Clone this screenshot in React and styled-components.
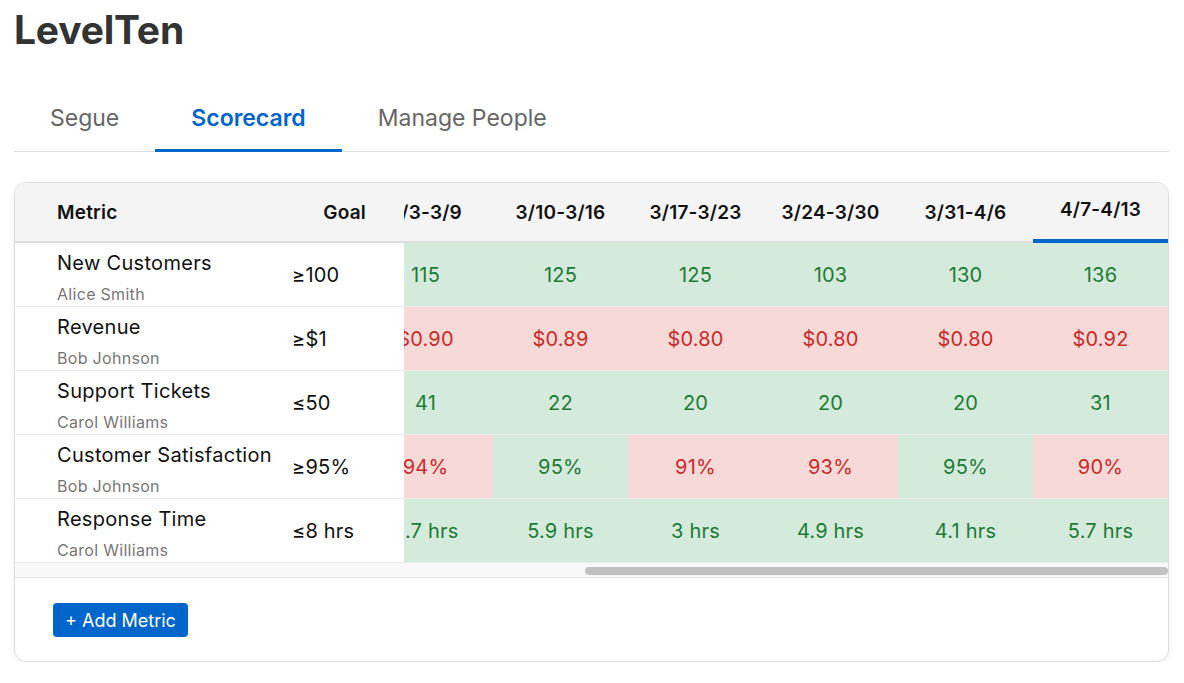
import React, { useLayoutEffect, useRef, useState } from 'react'
import styled, { createGlobalStyle } from 'styled-components'

const GlobalStyle = createGlobalStyle`
  body {
    margin: 0;
    background: #fff;
    font-family: Inter, "Noto Sans", sans-serif;
    color: #111;
  }
`

const Page = styled.div`
  padding: 0 15px 0 14px;
`

const Title = styled.h1`
  margin: 0;
  padding-top: 6px;
  font-size: 39px;
  line-height: 48px;
  font-weight: 700;
  color: #333;
  letter-spacing: -0.2px;
`

const Tabs = styled.div`
  display: flex;
  margin-top: 32px;
  border-bottom: 1px solid #ddd;
`

const Tab = styled.div`
  padding: 0 36px;
  height: 63px;
  display: flex;
  align-items: center;
  font-size: 23px;
  font-weight: ${p => (p.active ? 600 : 400)};
  color: ${p => (p.active ? '#0066cc' : '#666')};
  border-bottom: 3px solid ${p => (p.active ? '#0066cc' : 'transparent')};
  margin-bottom: -1px;
`

const Card = styled.div`
  margin-top: 30px;
  border: 1px solid #ddd;
  border-radius: 12px;
  box-shadow: 0 2px 6px rgba(0, 0, 0, 0.06);
  overflow: hidden;
`

const Scroller = styled.div`
  overflow-x: auto;
  scrollbar-width: none;
`

const ScrollTrack = styled.div`
  height: 14px;
  padding: 4px 0 2px;
  box-sizing: border-box;
  background: #f8f8f8;
`

const ScrollThumb = styled.div`
  height: 8px;
  border-radius: 4px;
  background: #c1c1c1;
`

const Table = styled.table`
  border-collapse: separate;
  border-spacing: 0;
  table-layout: fixed;
  width: ${p => p.width}px;
`

const Th = styled.th`
  height: 60px;
  box-sizing: border-box;
  padding: 0;
  background: #f4f4f4;
  border-bottom: 2px solid #ddd;
  font-size: 19px;
  font-weight: 600;
  letter-spacing: 0.2px;
  color: #111;
  text-align: center;
  white-space: nowrap;
`

const MetricTh = styled(Th)`
  position: sticky;
  left: 0;
  z-index: 2;
  text-align: left;
  padding-left: 42px;
`

const GoalTh = styled(Th)`
  position: sticky;
  left: 265px;
  z-index: 2;
  text-align: right;
  padding-right: 38px;
`

const WeekTh = styled(Th)`
  border-bottom-color: ${p => (p.current ? '#0066cc' : '#ddd')};
  box-shadow: ${p => (p.current ? 'inset 0 -2px 0 #0066cc' : 'none')};
  padding-bottom: ${p => (p.current ? '5px' : '0')};
`

const Td = styled.td`
  height: 64px;
  box-sizing: border-box;
  padding: 0;
  border-bottom: 1px solid #eaeaea;
  vertical-align: middle;
  white-space: nowrap;
`

const MetricTd = styled(Td)`
  position: sticky;
  left: 0;
  z-index: 1;
  background: #fff;
  vertical-align: top;
  padding: 8px 0 0 42px;
`

const MetricName = styled.div`
  font-size: 20px;
  line-height: 24px;
  letter-spacing: 0.3px;
  color: #111;
`

const Owner = styled.div`
  margin-top: 10px;
  font-size: 16px;
  line-height: 19px;
  letter-spacing: 0.3px;
  color: #777;
`

const GoalTd = styled(Td)`
  position: sticky;
  left: 265px;
  z-index: 1;
  background: #fff;
  padding-left: 12px;
  font-size: 20px;
  letter-spacing: 0.2px;
  color: #111;
`

const ValueTd = styled(Td)`
  text-align: center;
  font-size: 20px;
  letter-spacing: 0.2px;
  background: ${p => (p.ok ? '#d4eadb' : '#f7d9d8')};
  color: ${p => (p.ok ? '#1d7a36' : '#c92a2a')};
`

const Footer = styled.div`
  border-top: 1px solid #e8e8e8;
  padding: 25px 38px 24px;
`

const AddButton = styled.button`
  display: block;
  height: 34px;
  padding: 0 12px;
  border: none;
  border-radius: 4px;
  background: #0066cc;
  color: #fff;
  font-family: inherit;
  font-size: 18px;
  cursor: pointer;
`

const weeks = [
  '1/6-1/12', '1/13-1/19', '1/20-1/26', '1/27-2/2', '2/3-2/9', '2/10-2/16',
  '2/17-2/23', '2/24-3/2', '3/3-3/9', '3/10-3/16', '3/17-3/23', '3/24-3/30',
  '3/31-4/6', '4/7-4/13',
]

const metrics = [
  {
    name: 'New Customers', owner: 'Alice Smith', op: '≥', target: 100,
    fmt: v => `${v}`, goal: '≥100',
    values: [98, 104, 110, 96, 121, 108, 112, 99, 115, 125, 125, 103, 130, 136],
  },
  {
    name: 'Revenue', owner: 'Bob Johnson', op: '≥', target: 1,
    fmt: v => `$${v.toFixed(2)}`, goal: '≥$1',
    values: [0.85, 0.91, 0.88, 0.93, 0.87, 0.9, 0.86, 0.84, 0.9, 0.89, 0.8, 0.8, 0.8, 0.92],
  },
  {
    name: 'Support Tickets', owner: 'Carol Williams', op: '≤', target: 50,
    fmt: v => `${v}`, goal: '≤50',
    values: [38, 45, 52, 33, 29, 47, 36, 40, 41, 22, 20, 20, 20, 31],
  },
  {
    name: 'Customer Satisfaction', owner: 'Bob Johnson', op: '≥', target: 95,
    fmt: v => `${v}%`, goal: '≥95%',
    values: [96, 92, 95, 97, 93, 96, 94, 95, 94, 95, 91, 93, 95, 90],
  },
  {
    name: 'Response Time', owner: 'Carol Williams', op: '≤', target: 8,
    fmt: v => `${v} hrs`, goal: '≤8 hrs',
    values: [6.2, 7.1, 5.4, 6.8, 4.5, 7.9, 5.2, 6.1, 2.7, 5.9, 3, 4.9, 4.1, 5.7],
  },
]

const meets = (m, v) => (m.op === '≥' ? v >= m.target : v <= m.target)

const METRIC_W = 265
const GOAL_W = 124
const WEEK_W = 135

const Scorecard = () => {
  const scroller = useRef(null)
  const [thumb, setThumb] = useState({ left: 0, width: 0 })

  const syncThumb = () => {
    const el = scroller.current
    if (!el) return
    const ratio = el.clientWidth / el.scrollWidth
    setThumb({ left: el.scrollLeft * ratio, width: el.clientWidth * ratio })
  }

  useLayoutEffect(() => {
    const el = scroller.current
    if (el) el.scrollLeft = el.scrollWidth
    syncThumb()
  }, [])

  return (
    <Card>
      <Scroller ref={scroller} onScroll={syncThumb}>
        <Table width={METRIC_W + GOAL_W + WEEK_W * weeks.length}>
          <colgroup>
            <col style={{ width: METRIC_W }} />
            <col style={{ width: GOAL_W }} />
            {weeks.map(w => (
              <col key={w} style={{ width: WEEK_W }} />
            ))}
          </colgroup>
          <thead>
            <tr>
              <MetricTh>Metric</MetricTh>
              <GoalTh>Goal</GoalTh>
              {weeks.map((w, i) => (
                <WeekTh key={w} current={i === weeks.length - 1}>{w}</WeekTh>
              ))}
            </tr>
          </thead>
          <tbody>
            {metrics.map(m => (
              <tr key={m.name}>
                <MetricTd>
                  <MetricName>{m.name}</MetricName>
                  <Owner>{m.owner}</Owner>
                </MetricTd>
                <GoalTd>{m.goal}</GoalTd>
                {m.values.map((v, i) => (
                  <ValueTd key={weeks[i]} ok={meets(m, v)}>{m.fmt(v)}</ValueTd>
                ))}
              </tr>
            ))}
          </tbody>
        </Table>
      </Scroller>
      <ScrollTrack>
        <ScrollThumb style={{ marginLeft: thumb.left, width: thumb.width }} />
      </ScrollTrack>
      <Footer>
        <AddButton>+ Add Metric</AddButton>
      </Footer>
    </Card>
  )
}

const App = () => (
  <Page>
    <GlobalStyle />
    <Title>LevelTen</Title>
    <Tabs>
      <Tab>Segue</Tab>
      <Tab active>Scorecard</Tab>
      <Tab>Manage People</Tab>
    </Tabs>
    <Scorecard />
  </Page>
)

export default App
